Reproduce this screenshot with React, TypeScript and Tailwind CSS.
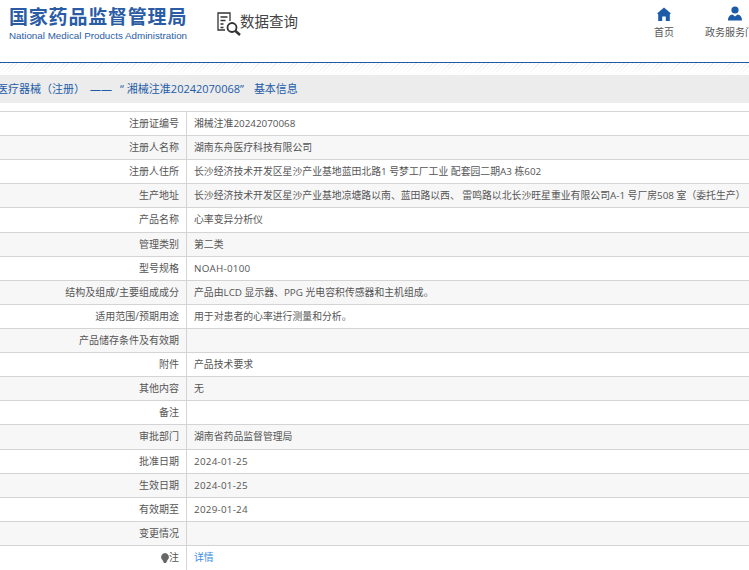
const rows = [
  ["注册证编号", "湘械注准20242070068"],
  ["注册人名称", "湖南东舟医疗科技有限公司"],
  ["注册人住所", "长沙经济技术开发区星沙产业基地蓝田北路1 号梦工厂工业 配套园二期A3 栋602"],
  ["生产地址", "长沙经济技术开发区星沙产业基地凉塘路以南、蓝田路以西、 雷鸣路以北长沙旺星重业有限公司A-1 号厂房508 室（委托生产）"],
  ["产品名称", "心率变异分析仪"],
  ["管理类别", "第二类"],
  ["型号规格", "NOAH-0100"],
  ["结构及组成/主要组成成分", "产品由LCD 显示器、PPG 光电容积传感器和主机组成。"],
  ["适用范围/预期用途", "用于对患者的心率进行测量和分析。"],
  ["产品储存条件及有效期", ""],
  ["附件", "产品技术要求"],
  ["其他内容", "无"],
  ["备注", ""],
  ["审批部门", "湖南省药品监督管理局"],
  ["批准日期", "2024-01-25"],
  ["生效日期", "2024-01-25"],
  ["有效期至", "2029-01-24"],
  ["变更情况", ""],
];

function SearchDoc() {
  return (
    <svg width="25" height="24" viewBox="0 0 25 24" fill="none" stroke="#333" strokeWidth="1.3">
      <path d="M8 18H1V1h12v8" />
      <path d="M3.5 5h7M3.5 8.5h5M3.5 12h3M3.5 15.5h3" />
      <circle cx="15" cy="15.5" r="4.5" strokeWidth="1.8" />
      <path d="M18.5 19L23 23" strokeWidth="2.4" />
    </svg>
  );
}

export default function App() {
  return (
    <div className="h-[570px] w-[749px] overflow-hidden bg-white font-['Open_Sans','Noto_Sans_CJK_SC',sans-serif] text-[10px] text-[#555]">
      <header className="box-content flex h-[62px] border-b border-[#1c5ba8]">
        <div className="ml-[9px] mt-[5px] w-[180px]">
          <div className="text-[19px] leading-[24px] font-bold tracking-[0.8px] whitespace-nowrap text-[#2a5ca6]">国家药品监督管理局</div>
          <div className="mt-[1px] font-['Liberation_Sans'] text-[9.8px] leading-[12px] whitespace-nowrap text-[#2a5ca6]">National Medical Products Administration</div>
        </div>
        <div className="ml-[28px] mt-[12px] flex items-start">
          <SearchDoc />
          <span className="-ml-[2px] text-[14.5px] leading-[20px] text-[#444]">数据查询</span>
        </div>
        <nav className="ml-auto flex shrink-0">
          <div className="mr-[26px] mt-[7px] flex w-[30px] flex-col items-center">
            <svg width="14" height="14" viewBox="0 0 14 14" fill="#1c5ba8">
              <path d="M7 .5L14 6.5 12.8 7V14H8.8V9.5H5.2V14H1.2V7L0 6.5Z" />
            </svg>
            <span className="mt-[4px] text-[#555]">首页</span>
          </div>
          <div className="mr-[-16px] mt-[6px] flex w-[60px] flex-col items-center">
            <svg width="14" height="15" viewBox="0 0 14 15" fill="#1c5ba8">
              <circle cx="7" cy="4" r="3.6" />
              <path d="M0 14.5C0 10.5 2 9 4.5 8.5L7 10.5 9.5 8.5C12 9 14 10.5 14 14.5Z" />
            </svg>
            <span className="mt-[4px] whitespace-nowrap text-[#555]">政务服务门户</span>
          </div>
        </nav>
      </header>
      <div className="h-[12px] bg-[linear-gradient(to_bottom,transparent,#fff),repeating-linear-gradient(135deg,#eee_0,#eee_1px,#fff_1px,#fff_3px)]" />
      <div className="flex h-[28px] items-center whitespace-nowrap bg-[#ececec] text-[11px] text-[#1c5ba8]">
        <span className="-ml-[3px]">医疗器械（注册）</span>
        <span className="ml-[5px]">——</span>
        <span className="ml-[8px]">“</span>
        <span className="ml-[3px]">湘械注准20242070068”</span>
        <span className="ml-[10px]">基本信息</span>
      </div>
      <div className="mt-[8px] border-t border-[#d4d4d4]">
        {rows.map(([label, value], i) => (
          <div key={label} className={`flex h-[24.11px] border-b border-[#d4d4d4] ${i % 2 ? "bg-[#f7f7f7]" : "bg-white"}`}>
            <div className="w-[187px] shrink-0 border-r border-[#d4d4d4] pr-[7px] text-right leading-[23px]">{label}</div>
            <div className={`pl-[7px] text-[9.85px] leading-[23px] whitespace-nowrap ${/^[\x00-\x7f]+$/.test(value) ? "tracking-[0.25px]" : ""}`}>{value}</div>
          </div>
        ))}
        <div className="flex h-[24px]">
          <div className="flex w-[187px] shrink-0 items-center justify-end border-r border-[#d4d4d4] pr-[7px] leading-[23px]">
            <svg width="8" height="10" viewBox="0 0 8 10" fill="#666">
              <path d="M4 0a4 4 0 0 1 2.5 7L5 10H3L1.5 7A4 4 0 0 1 4 0Z" />
            </svg>
            注
          </div>
          <div className="pl-[7px] text-[9.85px] leading-[23px] text-[#3b8de0]">详情</div>
        </div>
      </div>
    </div>
  );
}
